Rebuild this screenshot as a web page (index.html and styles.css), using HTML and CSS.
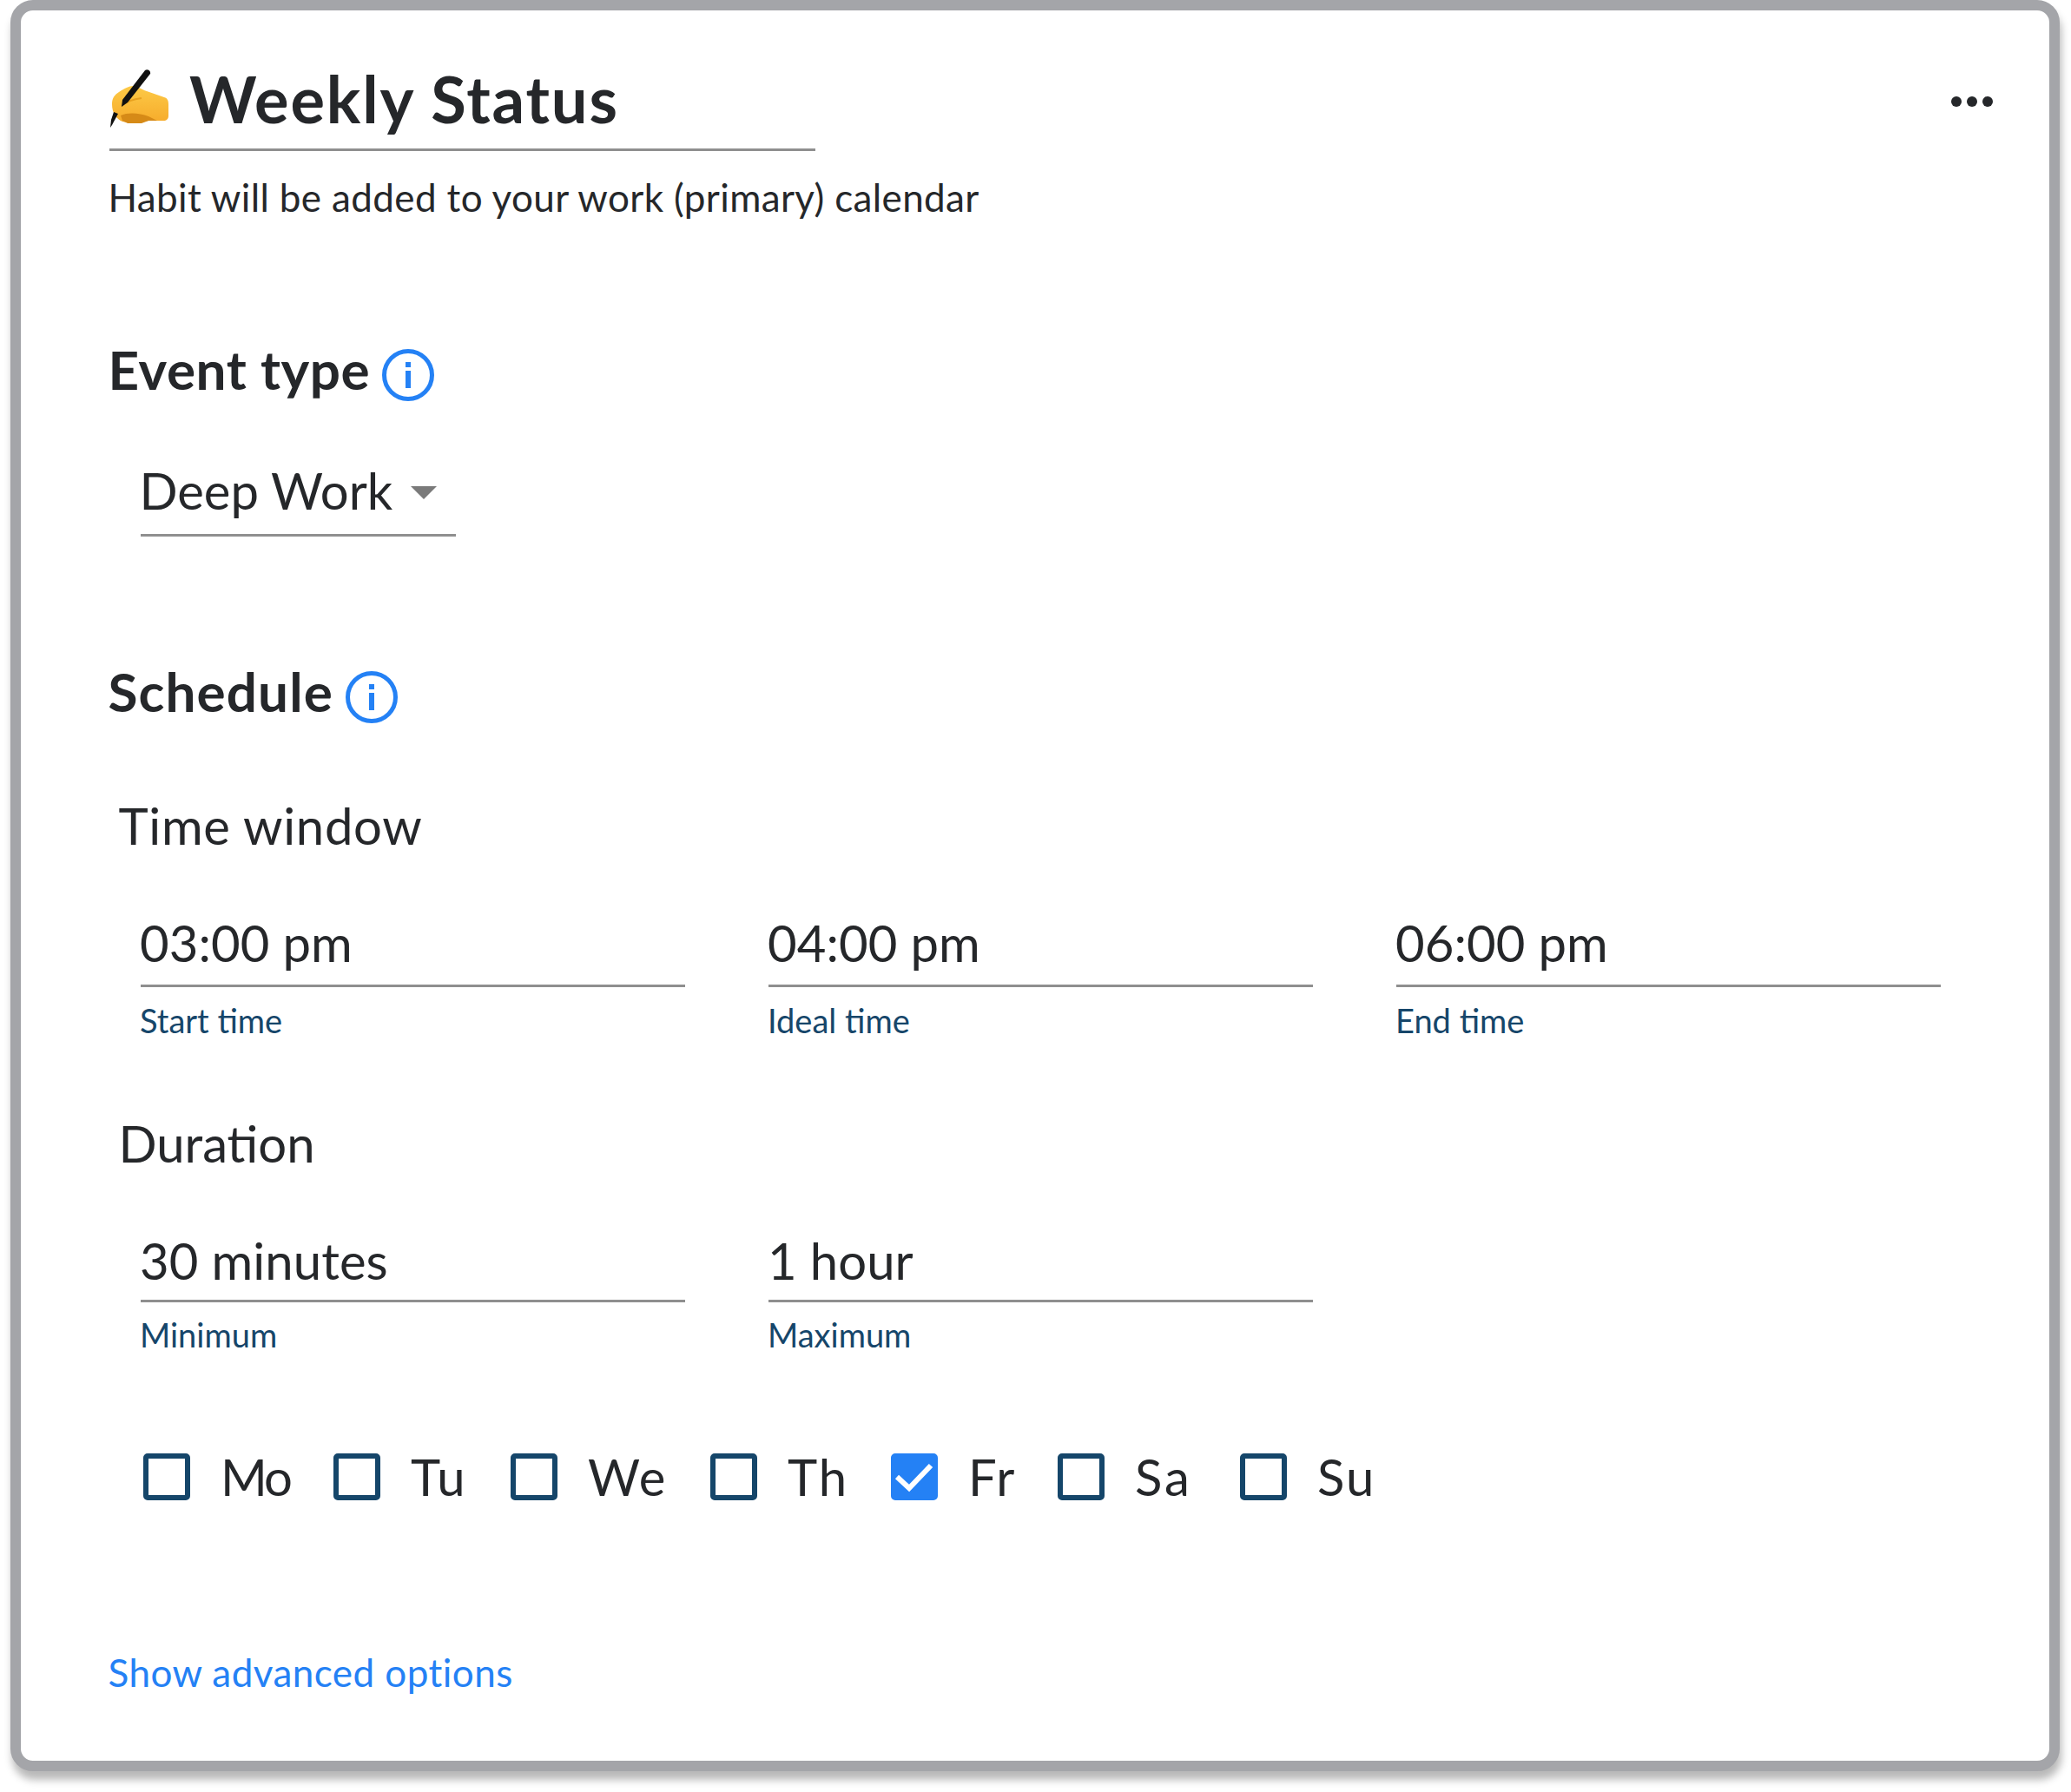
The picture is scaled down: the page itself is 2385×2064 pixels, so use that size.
FILE: index.html
```html
<!DOCTYPE html>
<html lang="en">
<head>
<meta charset="utf-8">
<title>Weekly Status</title>
<link rel="stylesheet" href="styles.css">
</head>
<body>
<main class="card">
  <header class="head">
    <div class="title-col">
      <div class="title-row">
        <svg class="emoji" viewBox="0 0 68 68" aria-hidden="true">
          <defs><linearGradient id="hand" x1="0" y1="0" x2="0" y2="1"><stop offset="0" stop-color="#fdca47"/><stop offset="1" stop-color="#f6ab2b"/></linearGradient></defs>
          <path d="M2 40 C2 33 5 29 10 26 C16 22 22 19 26 19 C31 19 36 23 42 25 L62 32 C66 33 67 36 67 40 L67 53 C67 57 65 59 61 59 L44 59 C34 62 22 62 14 60 C7 57 2 50 2 40 Z" fill="url(#hand)"/>
          <path d="M12 53 C20 49 34 50 44 54 L54 59 L44 59 L36 62 L20 62 L14 59 Z" fill="#d68a17"/>
          <path d="M13 42 C20 36 28 34 36 33" fill="none" stroke="#e8a11f" stroke-width="2"/>
          <path d="M40 1 C43 -1 47 2 46 5 L20 38 L13 43 L14 35 Z" fill="#111"/>
          <path d="M9 51 L2 64 L0 67 L1 58 L4 49 Z" fill="#111"/>
        </svg>
        <h1 class="title">Weekly Status</h1>
      </div>
      <p class="subtitle">Habit will be added to your work (primary) calendar</p>
    </div>
    <div class="dots"><i></i><i></i><i></i></div>
  </header>

  <section class="section-type">
    <h2 class="heading">Event type
      <svg class="info" viewBox="0 0 60 60" aria-hidden="true"><circle cx="30" cy="30" r="27.5" fill="none" stroke="#2481f5" stroke-width="5"/><rect x="27" y="15" width="6" height="6" fill="#2481f5"/><rect x="27" y="25" width="6" height="20" fill="#2481f5"/></svg>
    </h2>
    <div class="select"><span>Deep Work</span><b class="caret"></b></div>
  </section>

  <section class="section-schedule">
    <h2 class="heading heading-wide">Schedule
      <svg class="info" viewBox="0 0 60 60" aria-hidden="true"><circle cx="30" cy="30" r="27.5" fill="none" stroke="#2481f5" stroke-width="5"/><rect x="27" y="15" width="6" height="6" fill="#2481f5"/><rect x="27" y="25" width="6" height="20" fill="#2481f5"/></svg>
    </h2>
    <h3 class="sub first">Time window</h3>
    <div class="fields">
      <div class="field"><div class="value">03:00 pm</div><div class="hint">Start time</div></div>
      <div class="field"><div class="value">04:00 pm</div><div class="hint">Ideal time</div></div>
      <div class="field"><div class="value">06:00 pm</div><div class="hint">End time</div></div>
    </div>
    <h3 class="sub">Duration</h3>
    <div class="fields compact">
      <div class="field"><div class="value">30 minutes</div><div class="hint">Minimum</div></div>
      <div class="field"><div class="value">1 hour</div><div class="hint">Maximum</div></div>
    </div>
    <div class="days">
      <label class="day day-tight"><span class="box"></span>Mo</label>
      <label class="day"><span class="box"></span>Tu</label>
      <label class="day"><span class="box"></span>We</label>
      <label class="day"><span class="box"></span>Th</label>
      <label class="day"><span class="box on"><svg viewBox="0 0 54 54" aria-hidden="true"><path d="M7 27 L21 40 L46 14" fill="none" stroke="#fff" stroke-width="6"/></svg></span>Fr</label>
      <label class="day day-wide"><span class="box"></span>Sa</label>
      <label class="day"><span class="box"></span>Su</label>
    </div>
  </section>
  <a class="more">Show advanced options</a>
</main>
</body>
</html>
```
FILE: styles.css
```css
* { box-sizing: border-box; }
html, body { margin: 0; background: #fff; }
body { width: 2385px; height: 2064px; overflow: hidden; font-family: "Lato", "Noto Sans", sans-serif; color: #25272a; padding: 0 13px 0 12px; }
.card { height: 2040px; border: 12px solid #a4a5a9; border-radius: 26px; background: #fff; box-shadow: 2px 10px 10px rgba(0,0,0,.28); padding: 60px 0 0 102px; }
.head { display: flex; justify-content: space-between; align-items: flex-start; padding-right: 65px; }
.title-col { display: flex; flex-direction: column; }
.title-row { width: 813px; height: 102px; padding-bottom: 16px; border-bottom: 3px solid #8f8f8f; display: flex; align-items: center; gap: 23px; }
.emoji { width: 68px; height: 68px; margin-left: 1px; }
.title { margin: 0; font-size: 74px; font-weight: 700; line-height: 84px; letter-spacing: 1.85px; }
.subtitle { margin: 26px 0 0 -1.5px; font-size: 44px; line-height: 54px; letter-spacing: .37px; }
.dots { display: flex; gap: 6px; margin-top: 39px; }
.dots i { width: 12px; height: 12px; border-radius: 50%; background: #25272a; }
.section-type { margin-top: 135px; }
.heading { margin: 0 0 0 -1.5px; display: flex; align-items: center; gap: 14px; font-size: 62px; font-weight: 700; line-height: 72px; letter-spacing: .55px; }
.heading-wide { letter-spacing: 1.1px; }
.info { width: 60px; height: 60px; transform: translateY(7px); }
.select { margin: 68px 0 0 36px; width: 363px; height: 89px; border-bottom: 3px solid #8f8f8f; display: flex; align-items: center; font-size: 58px; padding-bottom: 16px; }
.select span { margin-left: -1.5px; }
.caret { margin: 6px 0 0 21px; border-style: solid; border-width: 15px 15px 0; border-color: #7a7a7a transparent transparent; }
.section-schedule { margin-top: 142px; }
.sub { margin: 84px 0 0 10.5px; font-size: 58px; font-weight: 400; line-height: 70px; }
.sub.first { margin-top: 84px; letter-spacing: .7px; }
.fields { display: grid; grid-template-columns: repeat(3, 627px); gap: 96px; margin: 66px 0 0 36px; }
.value { height: 85px; border-bottom: 3px solid #8f8f8f; font-size: 58px; line-height: 68px; text-indent: -1px; letter-spacing: .1px; }
.compact .value { height: 82px; }
.hint { margin-top: 15px; font-size: 38px; line-height: 46px; color: #16466a; text-indent: -1px; }
.compact .hint { margin-top: 14px; }
.days { display: grid; grid-template-columns: 219px 204px 230px 208px 192px 210px auto; margin: 106px 0 0 39px; }
.day { display: flex; align-items: center; gap: 35px; font-size: 58px; line-height: 70px; letter-spacing: 2px; }
.day-tight { letter-spacing: -3px; }
.day-wide { letter-spacing: 3px; }
.box { width: 54px; height: 54px; border: 6px solid #15466a; border-radius: 5px; display: block; }
.box.on { background: #2481f5; border-color: #2481f5; }
.box.on svg { display: block; width: 54px; height: 54px; margin: -6px; }
.more { display: block; margin: 163px 0 0 -1.5px; font-size: 44px; line-height: 54px; color: #2481f5; letter-spacing: .45px; }
```
